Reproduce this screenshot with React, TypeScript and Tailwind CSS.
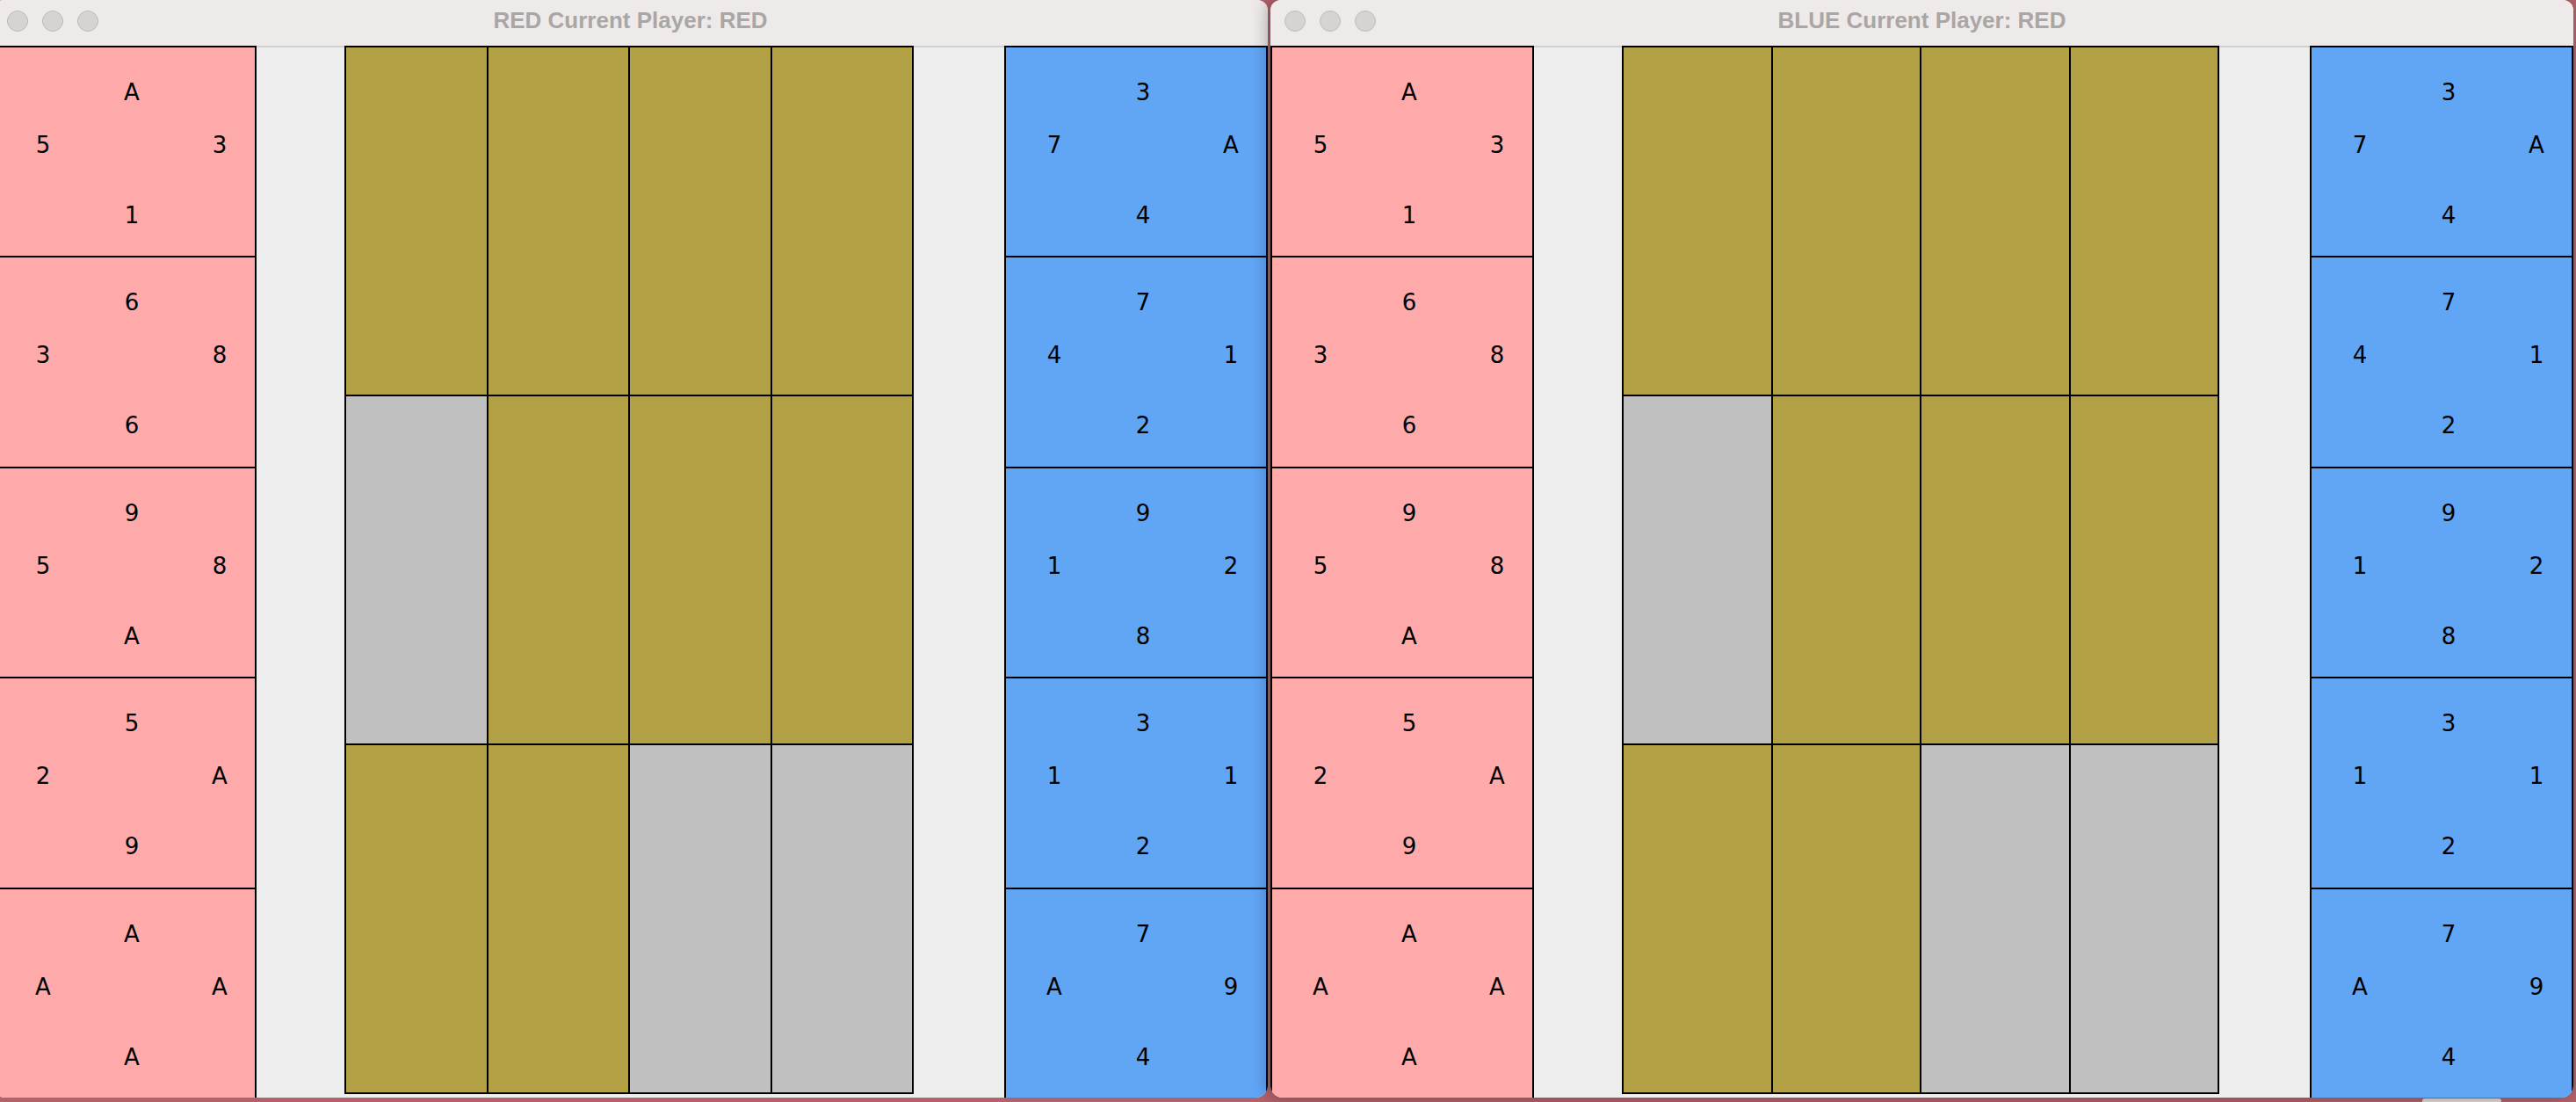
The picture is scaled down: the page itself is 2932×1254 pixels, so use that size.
import type { ReactNode } from "react";

type Card = [string, string, string, string];

const redCards: Card[] = [
  ["A", "5", "3", "1"],
  ["6", "3", "8", "6"],
  ["9", "5", "8", "A"],
  ["5", "2", "A", "9"],
  ["A", "A", "A", "A"],
];

const blueCards: Card[] = [
  ["3", "7", "A", "4"],
  ["7", "4", "1", "2"],
  ["9", "1", "2", "8"],
  ["3", "1", "1", "2"],
  ["7", "A", "9", "4"],
];

// true = claimed (olive), false = empty (grey)
const board: boolean[] = [
  true, true, true, true,
  false, true, true, true,
  true, true, false, false,
];

function CardTile({ card, tone }: { card: Card; tone: "red" | "blue" }) {
  const [top, left, right, bottom] = card;
  return (
    <div
      className={`flex-1 border-t-2 border-black pt-[36px] ${
        tone === "red" ? "bg-[#ffaaaa]" : "bg-[#61a5f5]"
      }`}
    >
      <div className="ml-[136px] w-[40px] text-center leading-[30px]">{top}</div>
      <div className="mt-[30px] flex leading-[30px]">
        <div className="ml-[35px] w-[40px] text-center">{left}</div>
        <div className="ml-[161px] w-[40px] text-center">{right}</div>
      </div>
      <div className="mt-[50px] ml-[136px] w-[40px] text-center leading-[30px]">{bottom}</div>
    </div>
  );
}

function Hand({ cards, tone }: { cards: Card[]; tone: "red" | "blue" }) {
  return (
    <div className="flex w-[300px] shrink-0 flex-col border-x-2 border-black">
      {cards.map((c, i) => (
        <CardTile key={i} card={c} tone={tone} />
      ))}
    </div>
  );
}

function Board() {
  return (
    <div className="flex flex-1 flex-col pb-[4px]">
      <div className="grid flex-1 grid-cols-4 grid-rows-3 gap-[2px] bg-black p-[2px]">
        {board.map((taken, i) => (
          <div key={i} className={taken ? "bg-[#b1a044]" : "bg-[#c0c0c0]"} />
        ))}
      </div>
    </div>
  );
}

function Gap({ w }: { w: string }) {
  return <div className={`${w} shrink-0 border-t-2 border-[#cfcfcf] bg-[#eeeeee]`} />;
}

function Window({
  title,
  className,
  children,
}: {
  title: string;
  className: string;
  children: ReactNode;
}) {
  return (
    <div
      className={`flex h-[1249px] shrink-0 flex-col overflow-hidden rounded-t-[12px] rounded-b-[14px] bg-[#eeeeee] ${className}`}
    >
      <div className="relative h-[52px] shrink-0 bg-[#eeeae9]">
        <div className="flex gap-[16px] pl-[16px] pt-[12px]">
          {[0, 1, 2].map((i) => (
            <span
              key={i}
              className="h-[24px] w-[24px] rounded-full border border-[#bfbbba] bg-[#d6d3d2]"
            />
          ))}
        </div>
        <div className="absolute inset-x-0 top-0 pt-[10px] text-center font-['Liberation_Sans',Arial,sans-serif] text-[26px] font-bold leading-[26px] text-[#aaa6a5]">
          {title}
        </div>
      </div>
      <div className="flex flex-1 font-['DejaVu_Sans',sans-serif] text-[26px] text-black">
        {children}
      </div>
    </div>
  );
}

export default function App() {
  return (
    <div className="relative flex h-[1254px] w-[2932px] gap-[3px] overflow-hidden bg-[#b1626b]">
      <Window title="RED Current Player: RED" className="-ml-[8px] w-[1451px]">
        <Hand cards={redCards} tone="red" />
        <Gap w="w-[100px]" />
        <Board />
        <Gap w="w-[103px]" />
        <Hand cards={blueCards} tone="blue" />
      </Window>
      <Window
        title="BLUE Current Player: RED"
        className="relative z-10 w-[1483px] shadow-[-4px_0_18px_rgba(0,0,0,0.28)]"
      >
        <Hand cards={redCards} tone="red" />
        <Gap w="w-[100px]" />
        <Board />
        <Gap w="w-[103px]" />
        <Hand cards={blueCards} tone="blue" />
      </Window>
      <div className="absolute bottom-0 left-[2757px] h-[4px] w-[90px] rounded-t-[3px] bg-[#d9d9d9]" />
    </div>
  );
}
